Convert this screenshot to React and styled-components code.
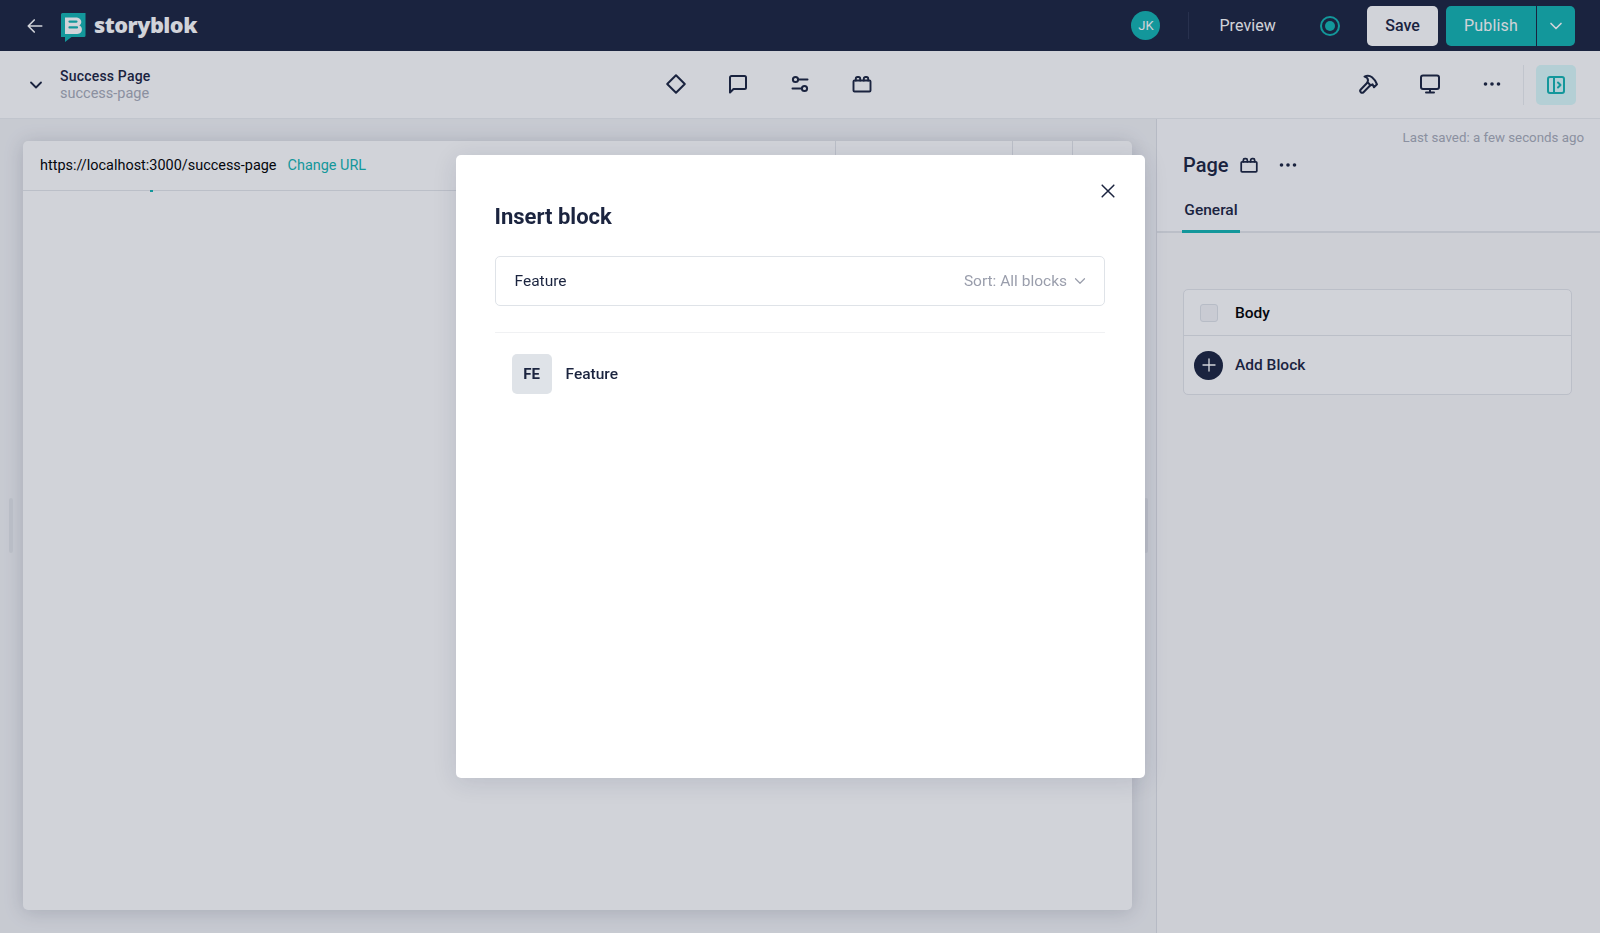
import React from "react";
import styled, { createGlobalStyle } from "styled-components";

const GlobalStyle = createGlobalStyle`
  html, body {
    margin: 0;
    padding: 0;
    height: 100%;
    overflow: hidden;
    background: #f3f4f6;
    font-family: Roboto, "Liberation Sans", sans-serif;
    color: #1b243f;
  }
  * {
    box-sizing: border-box;
  }
`;

const NAVY = "#1b243f";
const TEAL = "#12b5b2";

// page frame
const Page = styled.div`
  display: flex;
  flex-direction: column;
  width: 1600px;
  height: 933px;
`;

const TopBar = styled.header`
  display: flex;
  align-items: center;
  height: 51px;
  flex: none;
  padding: 0 25px 0 26px;
  background: ${NAVY};
  color: #fff;
`;

const BackButton = styled.div`
  display: flex;
  width: 34px;
  color: #fff;
`;

const Logo = styled.div`
  display: flex;
  align-items: center;
  gap: 8px;
  flex: 1;
`;

const LogoSvg = styled.svg`
  margin-top: 4px;
`;

const LogoText = styled.span`
  margin-bottom: 2px;
  font-family: "Open Sans", sans-serif;
  font-size: 21.7px;
  font-weight: 800;
  letter-spacing: -0.5px;
  color: #fff;
`;

const Avatar = styled.div`
  display: flex;
  align-items: center;
  justify-content: center;
  width: 29px;
  height: 29px;
  border-radius: 50%;
  background: ${TEAL};
  color: #fff;
  font-size: 13px;
`;

const BarDivider = styled.div`
  width: 1px;
  height: 27px;
  margin: 0 30px 0 28px;
  background: #2c3552;
`;

const PreviewLabel = styled.span`
  font-size: 16px;
  letter-spacing: 0.1px;
  margin-right: 44px;
`;

const RadioMark = styled.div`
  display: flex;
  margin-right: 27px;
`;

const SaveButton = styled.button`
  width: 71px;
  height: 40px;
  margin-right: 8px;
  border: none;
  border-radius: 5px;
  background: #fff;
  color: ${NAVY};
  font: 500 16px Roboto, sans-serif;
`;

const PublishButton = styled.button`
  width: 91px;
  height: 40px;
  border: none;
  border-right: 1px solid ${NAVY};
  border-radius: 5px 0 0 5px;
  background: ${TEAL};
  color: #fff;
  font: 400 16px Roboto, sans-serif;
  letter-spacing: 0.2px;
`;

const PublishMenu = styled.button`
  display: flex;
  align-items: center;
  justify-content: center;
  width: 38px;
  height: 40px;
  padding: 0;
  border: none;
  border-radius: 0 5px 5px 0;
  background: ${TEAL};
  color: #fff;
`;

// story toolbar
const ToolBar = styled.div`
  display: flex;
  align-items: center;
  height: 68px;
  flex: none;
  padding: 0 24px 0 26px;
  background: #fff;
  border-bottom: 1px solid #eceef1;
`;

const StoryToggle = styled.div`
  display: flex;
  width: 34px;
  color: ${NAVY};
`;

const StoryInfo = styled.div`
  display: flex;
  flex-direction: column;
  width: 585px;
`;

const StoryName = styled.span`
  font-size: 14px;
  font-weight: 500;
  line-height: 17px;
  letter-spacing: 0.2px;
`;

const StorySlug = styled.span`
  font-size: 14.5px;
  line-height: 17px;
  color: #a8acb8;
`;

const ToolGroup = styled.div`
  display: flex;
  flex: ${(p) => (p.$grow ? 1 : "none")};
`;

const ToolIcon = styled.div`
  display: flex;
  align-items: center;
  justify-content: center;
  width: 62px;
  height: 40px;
  margin-top: -2px;
  color: ${NAVY};
`;

const ToolDivider = styled.div`
  width: 1px;
  height: 40px;
  margin: 0 12px 0 0;
  background: #eceef1;
`;

const PanelToggle = styled.div`
  display: flex;
  align-items: center;
  justify-content: center;
  width: 40px;
  height: 40px;
  border-radius: 5px;
  background: #dbfbfb;
  color: ${TEAL};
`;

// working area
const Workspace = styled.main`
  display: flex;
  flex: 1;
  min-height: 0;
`;

const Canvas = styled.section`
  position: relative;
  display: flex;
  flex: none;
  width: 1156px;
  padding: 22px 24px 23px 23px;
`;

const DragHandle = styled.div`
  position: absolute;
  top: 379px;
  ${(p) => (p.$side === "left" ? "left: 9px;" : "right: 8px;")}
  width: 4px;
  height: 55px;
  border-radius: 2px;
  background: #e2e4e8;
`;

const PreviewFrame = styled.div`
  display: flex;
  flex-direction: column;
  flex: 1;
  border-radius: 5px;
  background: #fff;
  box-shadow: 0 2px 20px rgba(27, 36, 63, 0.18);
`;

const UrlBar = styled.div`
  display: flex;
  align-items: stretch;
  height: 50px;
  flex: none;
  padding-left: 17px;
  border-bottom: 1px solid #e4e6ea;
`;

const UrlInfo = styled.div`
  display: flex;
  align-items: center;
  gap: 11px;
  flex: 1;
  font-size: 14.45px;
`;

const UrlText = styled.span`
  color: #000;
`;

const ChangeUrl = styled.span`
  color: ${TEAL};
`;

const UrlSlot = styled.div`
  width: ${(p) => p.$w}px;
  border-left: 1px solid #e4e6ea;
`;

const PreviewMark = styled.div`
  position: absolute;
  top: 71px;
  left: 150px;
  width: 3px;
  height: 2px;
  background: ${TEAL};
`;

// right sidebar
const Sidebar = styled.aside`
  display: flex;
  flex-direction: column;
  flex: 1;
  border-left: 1px solid #dee0e5;
  background: #fdfdfe;
`;

const SavedText = styled.div`
  padding: 11px 16px 0 0;
  text-align: right;
  font-size: 13.3px;
  line-height: 16px;
  color: #a8acb8;
`;

const SidebarHead = styled.div`
  display: flex;
  align-items: center;
  height: 30px;
  margin-top: 4px;
  padding-left: 26px;
`;

const SidebarTitle = styled.h2`
  margin: 0 9px 0 0;
  font-size: 20px;
  font-weight: 500;
`;

const HeadIcon = styled.div`
  display: flex;
  margin-right: ${(p) => p.$gap || 0}px;
`;

const TabRow = styled.div`
  display: flex;
  height: 44px;
  margin-top: 9px;
  padding-left: 25px;
  border-bottom: 2px solid #e4e6ea;
`;

const Tab = styled.div`
  width: 58px;
  height: 44px;
  padding-top: 12px;
  text-align: center;
  font-size: 15.5px;
  font-weight: 500;
  border-bottom: 3px solid ${TEAL};
`;

const SidebarBody = styled.div`
  flex: 1;
  padding: 56px 28px 0 26px;
  background: #fafafb;
`;

const BlockCard = styled.div`
  border: 1px solid #e4e6ea;
  border-radius: 5px;
  background: #fff;
`;

const BlockRow = styled.div`
  display: flex;
  align-items: center;
  gap: 12px;
  height: ${(p) => p.$h}px;
  padding-left: 10px;
  border-top: ${(p) => (p.$first ? "none" : "1px solid #e4e6ea")};
  font-size: 15.5px;
  font-weight: 500;
`;

const CheckWrap = styled.div`
  display: flex;
  justify-content: center;
  width: 29px;
`;

const Checkbox = styled.div`
  width: 18px;
  height: 18px;
  border: 1px solid #dfe3e8;
  border-radius: 3px;
  background: #f5f6f8;
`;

const BodyLabel = styled.span`
  color: #000;
`;

const AddCircle = styled.div`
  display: flex;
  align-items: center;
  justify-content: center;
  width: 29px;
  height: 29px;
  border-radius: 50%;
  background: ${NAVY};
  color: #fff;
`;

// dialog
const Overlay = styled.div`
  position: fixed;
  inset: 0;
  display: flex;
  justify-content: center;
  align-items: flex-start;
  padding-top: 155px;
  background: rgba(27, 36, 63, 0.2);
`;

const Modal = styled.div`
  position: relative;
  width: 689px;
  height: 623px;
  padding: 50px 39.5px 0 39px;
  border-radius: 5px;
  background: #fff;
  box-shadow: 0 4px 24px rgba(27, 36, 63, 0.12);
`;

const CloseButton = styled.div`
  position: absolute;
  top: 26px;
  right: 27px;
  display: flex;
  color: ${NAVY};
`;

const ModalTitle = styled.h2`
  margin: 0 0 27px;
  font-size: 22px;
  font-weight: 700;
  line-height: 24px;
  color: ${NAVY};
`;

const SearchBox = styled.div`
  display: flex;
  align-items: center;
  justify-content: space-between;
  height: 50px;
  padding: 0 15px 0 19px;
  border: 1px solid #dfe3e8;
  border-radius: 5px;
  font-size: 15.5px;
`;

const SortLabel = styled.span`
  display: flex;
  align-items: center;
  gap: 4px;
  margin-top: -1px;
  color: #9a9eac;
`;

const ModalDivider = styled.div`
  height: 1px;
  margin-top: 26px;
  background: #f0f1f3;
`;

const ResultRow = styled.div`
  display: flex;
  align-items: center;
  gap: 14px;
  margin-top: 21px;
  padding-left: 17px;
`;

const BlockTile = styled.div`
  display: flex;
  align-items: center;
  justify-content: center;
  width: 40px;
  height: 40px;
  border-radius: 5px;
  background: #dfe3e8;
  font-size: 15px;
  font-weight: 700;
`;

const ResultName = styled.span`
  font-size: 15.5px;
  font-weight: 500;
`;

// icons
const Stroke = ({ size = 24, width = 2, children }) => (
  <svg
    width={size}
    height={size}
    viewBox="0 0 24 24"
    fill="none"
    stroke="currentColor"
    strokeWidth={width}
    strokeLinecap="round"
    strokeLinejoin="round"
  >
    {children}
  </svg>
);

const ChevronDown = ({ size = 24, width = 2 }) => (
  <Stroke size={size} width={width}>
    <path d="M6 9l6 6 6-6" />
  </Stroke>
);

const BlockIcon = ({ size = 24 }) => (
  <Stroke size={size} width={1.9}>
    <path d="M4.5 8.5h15a1 1 0 0 1 1 1v9a1 1 0 0 1-1 1h-15a1 1 0 0 1-1-1v-9a1 1 0 0 1 1-1z" />
    <path d="M5.8 8.5V6.7A1.7 1.7 0 0 1 7.5 5h1A1.7 1.7 0 0 1 10.2 6.7v1.8M13.8 8.5V6.7A1.7 1.7 0 0 1 15.5 5h1a1.7 1.7 0 0 1 1.7 1.7v1.8" />
  </Stroke>
);

const Dots = () => (
  <svg width="24" height="24" viewBox="0 0 24 24" fill="currentColor">
    <circle cx="5.5" cy="12" r="1.8" />
    <circle cx="12" cy="12" r="1.8" />
    <circle cx="18.5" cy="12" r="1.8" />
  </svg>
);

const LogoMark = () => (
  <LogoSvg width="26" height="29" viewBox="0 0 26 29">
    <path d="M1 1.5A1.5 1.5 0 0 1 2.5 0H25.5V22.5A1.5 1.5 0 0 1 24 24H11.5L5 29V24H1z" fill={TEAL} />
    <path
      d="M5 4.5h10.5c3.6 0 5.8 1.8 5.8 4.6 0 1.6-.8 2.8-2 3.4 1.6.6 2.6 2 2.6 3.9 0 3-2.3 4.6-6 4.6H5z"
      fill="#fff"
    />
    <path d="M9.5 8.6h7M9.5 14.4h7.5" stroke={TEAL} strokeWidth="2.2" strokeLinecap="round" />
  </LogoSvg>
);

export default function App() {
  return (
    <>
      <GlobalStyle />
      <Page>
        <TopBar>
          <BackButton>
            <Stroke size={18} width={2.2}>
              <path d="M21 12H3M11 4l-8 8 8 8" />
            </Stroke>
          </BackButton>
          <Logo>
            <LogoMark />
            <LogoText>storyblok</LogoText>
          </Logo>
          <Avatar>JK</Avatar>
          <BarDivider />
          <PreviewLabel>Preview</PreviewLabel>
          <RadioMark>
            <svg width="20" height="20" viewBox="0 0 20 20" fill="none">
              <circle cx="10" cy="10" r="9" stroke={TEAL} strokeWidth="2" />
              <circle cx="10" cy="10" r="5" fill={TEAL} />
            </svg>
          </RadioMark>
          <SaveButton>Save</SaveButton>
          <PublishButton>Publish</PublishButton>
          <PublishMenu>
            <ChevronDown size={20} />
          </PublishMenu>
        </TopBar>

        <ToolBar>
          <StoryToggle>
            <ChevronDown size={20} width={2.2} />
          </StoryToggle>
          <StoryInfo>
            <StoryName>Success Page</StoryName>
            <StorySlug>success-page</StorySlug>
          </StoryInfo>
          <ToolGroup $grow>
            <ToolIcon>
              <Stroke>
                <path d="M12 3.2l8.8 8.8-8.8 8.8L3.2 12z" />
              </Stroke>
            </ToolIcon>
            <ToolIcon>
              <Stroke>
                <path d="M4 20.5V5.5A1.5 1.5 0 0 1 5.5 4h13A1.5 1.5 0 0 1 20 5.5v10a1.5 1.5 0 0 1-1.5 1.5H7.5z" />
              </Stroke>
            </ToolIcon>
            <ToolIcon>
              <Stroke>
                <circle cx="7.5" cy="7.5" r="2.6" />
                <path d="M10.5 7.5H19.5M4.5 16.5H13.5" />
                <circle cx="16.5" cy="16.5" r="2.6" />
              </Stroke>
            </ToolIcon>
            <ToolIcon>
              <BlockIcon />
            </ToolIcon>
          </ToolGroup>
          <ToolGroup>
            <ToolIcon>
              <Stroke>
                <path d="M11.5 10.5L4.8 17.5a1.9 1.9 0 0 0 2.7 2.7L14.3 13.3" />
                <path d="M8.5 4.6c2.8-1.5 5.5-1 7.5.7 2.4 2 4 4.2 5 7l-3 3-1.5-3-1.9 1-3.1-3.1.5-2c0-1.5-1.3-3-3.5-3.6z" />
              </Stroke>
            </ToolIcon>
            <ToolIcon>
              <Stroke>
                <rect x="3" y="3.5" width="18" height="13.5" rx="2" />
                <path d="M12 17v3.5M8 20.5h8" />
              </Stroke>
            </ToolIcon>
            <ToolIcon>
              <Dots />
            </ToolIcon>
          </ToolGroup>
          <ToolDivider />
          <PanelToggle>
            <Stroke>
              <rect x="4" y="4" width="16" height="16" rx="2" />
              <path d="M10 4v16M14 9.5l2.5 2.5-2.5 2.5" />
            </Stroke>
          </PanelToggle>
        </ToolBar>

        <Workspace>
          <Canvas>
            <DragHandle $side="left" />
            <PreviewFrame>
              <UrlBar>
                <UrlInfo>
                  <UrlText>https://localhost:3000/success-page</UrlText>
                  <ChangeUrl>Change URL</ChangeUrl>
                </UrlInfo>
                <UrlSlot $w={177} />
                <UrlSlot $w={60} />
                <UrlSlot $w={60} />
              </UrlBar>
              <PreviewMark />
            </PreviewFrame>
            <DragHandle $side="right" />
          </Canvas>

          <Sidebar>
            <SavedText>Last saved: a few seconds ago</SavedText>
            <SidebarHead>
              <SidebarTitle>Page</SidebarTitle>
              <HeadIcon $gap={16}>
                <BlockIcon size={22} />
              </HeadIcon>
              <HeadIcon>
                <Dots />
              </HeadIcon>
            </SidebarHead>
            <TabRow>
              <Tab>General</Tab>
            </TabRow>
            <SidebarBody>
              <BlockCard>
                <BlockRow $first $h={45}>
                  <CheckWrap>
                    <Checkbox />
                  </CheckWrap>
                  <BodyLabel>Body</BodyLabel>
                </BlockRow>
                <BlockRow $h={59}>
                  <AddCircle>
                    <Stroke size={18} width={1.8}>
                      <path d="M12 4v16M4 12h16" />
                    </Stroke>
                  </AddCircle>
                  Add Block
                </BlockRow>
              </BlockCard>
            </SidebarBody>
          </Sidebar>
        </Workspace>
      </Page>

      <Overlay>
        <Modal>
          <CloseButton>
            <Stroke size={20} width={1.8}>
              <path d="M5 5l14 14M19 5L5 19" />
            </Stroke>
          </CloseButton>
          <ModalTitle>Insert block</ModalTitle>
          <SearchBox>
            Feature
            <SortLabel>
              Sort: All blocks
              <ChevronDown size={18} width={1.6} />
            </SortLabel>
          </SearchBox>
          <ModalDivider />
          <ResultRow>
            <BlockTile>FE</BlockTile>
            <ResultName>Feature</ResultName>
          </ResultRow>
        </Modal>
      </Overlay>
    </>
  );
}
